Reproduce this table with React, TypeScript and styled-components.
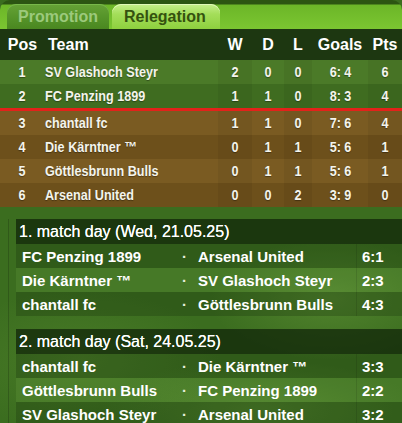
import React from "react";
import styled, { createGlobalStyle } from "styled-components";

const Global = createGlobalStyle`
  html, body { margin: 0; padding: 0; }
  body {
    width: 402px;
    height: 423px;
    overflow: hidden;
    font-family: "Liberation Sans", Arial, sans-serif;
    background:
      radial-gradient(ellipse 120px 60px at 330px 300px, rgba(120,170,70,0.35), transparent),
      radial-gradient(ellipse 140px 70px at 80px 360px, rgba(110,160,60,0.25), transparent),
      radial-gradient(ellipse 160px 50px at 260px 410px, rgba(120,170,70,0.3), transparent),
      #3b6d1f;
  }
`;

const Page = styled.div`
  display: flex;
  flex-direction: column;
`;

const TabBar = styled.div`
  display: flex;
  align-items: flex-end;
  gap: 3px;
  height: 29px;
  box-sizing: border-box;
  padding: 4px 0 0 7px;
  border-radius: 10px 10px 0 0;
  background: linear-gradient(#2c5512 0, #2c5512 4px, #6cb628 5px, #7bc631 100%);
`;

const Tab = styled.div<{ $active?: boolean }>`
  height: 25px;
  box-sizing: border-box;
  padding: 0 ${(p) => (p.$active ? "14px" : "11px")} 0 ${(p) => (p.$active ? "12px" : "11px")};
  display: flex;
  align-items: center;
  border-radius: 9px 9px 0 0;
  font-weight: bold;
  font-size: 16px;
  color: ${(p) => (p.$active ? "#35520f" : "#9cc97c")};
  background: ${(p) =>
    p.$active
      ? "linear-gradient(#c6ef8c 0, #a4de5a 40%, #8ed03e 100%)"
      : "linear-gradient(#66a236 0, #56952a 50%, #4a8720 100%)"};
  box-shadow: ${(p) => (p.$active ? "inset 0 1px 0 #e0f8b8" : "inset 0 1px 0 #78b84a")};
`;

const COLS = "45px 173px 34px 32px 28px 56px 34px";

const HeadRow = styled.div`
  display: grid;
  grid-template-columns: ${COLS};
  height: 31px;
  align-items: center;
  background: #1d3711;
  color: #ffffff;
  font-weight: bold;
  font-size: 16px;
`;

const HeadCell = styled.div<{ $left?: boolean }>`
  text-align: ${(p) => (p.$left ? "left" : "center")};
  padding-left: ${(p) => (p.$left ? "3px" : "0")};
`;

const Row = styled.div<{ $zone: "up" | "down"; $odd: boolean; $cut?: boolean }>`
  display: grid;
  grid-template-columns: ${COLS};
  height: 24px;
  align-items: center;
  color: #f4f4ec;
  font-weight: bold;
  font-size: 14.5px;
  text-shadow: 0 1px 1px rgba(0, 0, 0, 0.35);
  background: ${(p) =>
    p.$zone === "up"
      ? p.$odd
        ? "#4b7a28"
        : "#3f6c20"
      : p.$odd
      ? "#7a5b22"
      : "#6d501b"};
  border-bottom: ${(p) => (p.$cut ? "3px solid #e3221a" : "none")};
`;

const Cell = styled.div<{ $left?: boolean; $shade?: boolean }>`
  height: 100%;
  display: flex;
  align-items: center;
  justify-content: ${(p) => (p.$left ? "flex-start" : "center")};
  background: ${(p) => (p.$shade ? "rgba(0,0,0,0.05)" : "transparent")};
  white-space: pre;
`;

const Narrow = styled.span<{ $left?: boolean }>`
  display: inline-block;
  transform: scaleX(0.87);
  transform-origin: ${(p) => (p.$left ? "left center" : "center")};
`;

const Matches = styled.div`
  margin: 12px 0 0 8px;
  padding-left: 7px;
  border-left: 1px solid rgba(0, 0, 0, 0.18);
  display: flex;
  flex-direction: column;
  gap: 13px;
`;

const Section = styled.div`
  display: flex;
  flex-direction: column;
`;

const DayHead = styled.div`
  height: 25px;
  display: flex;
  align-items: center;
  padding-left: 3px;
  background: rgba(15, 35, 8, 0.72);
  color: #ffffff;
  font-size: 16px;
  text-shadow: 0 0 0.4px #ffffff;
`;

const MatchRow = styled.div<{ $odd: boolean }>`
  display: grid;
  grid-template-columns: 160px 16px 158px 1fr;
  height: 24px;
  align-items: center;
  padding-left: 6px;
  background: ${(p) => (p.$odd ? "rgba(20,45,10,0.28)" : "rgba(140,200,90,0.14)")};
  color: #ffffff;
  font-weight: bold;
  font-size: 15px;
  white-space: nowrap;
`;

const Dot = styled.div`
  text-align: left;
  color: #e6eedc;
`;

const Score = styled.div`
  height: 100%;
  display: flex;
  align-items: center;
  padding-left: 5px;
  border-left: 1px solid rgba(0, 0, 0, 0.1);
`;

const table = [
  { pos: 1, team: "SV Glashoch Steyr", w: 2, d: 0, l: 0, g: "6: 4", p: 6 },
  { pos: 2, team: "FC Penzing 1899", w: 1, d: 1, l: 0, g: "8: 3", p: 4 },
  { pos: 3, team: "chantall fc", w: 1, d: 1, l: 0, g: "7: 6", p: 4 },
  { pos: 4, team: "Die Kärntner ™", w: 0, d: 1, l: 1, g: "5: 6", p: 1 },
  { pos: 5, team: "Göttlesbrunn Bulls", w: 0, d: 1, l: 1, g: "5: 6", p: 1 },
  { pos: 6, team: "Arsenal United", w: 0, d: 0, l: 2, g: "3: 9", p: 0 },
];

const days = [
  {
    title: "1. match day (Wed, 21.05.25)",
    games: [
      ["FC Penzing 1899", "Arsenal United", "6:1"],
      ["Die Kärntner ™", "SV Glashoch Steyr", "2:3"],
      ["chantall fc", "Göttlesbrunn Bulls", "4:3"],
    ],
  },
  {
    title: "2. match day (Sat, 24.05.25)",
    games: [
      ["chantall fc", "Die Kärntner ™", "3:3"],
      ["Göttlesbrunn Bulls", "FC Penzing 1899", "2:2"],
      ["SV Glashoch Steyr", "Arsenal United", "3:2"],
    ],
  },
];

export default function App() {
  return (
    <Page>
      <Global />
      <TabBar>
        <Tab>Promotion</Tab>
        <Tab $active>Relegation</Tab>
      </TabBar>
      <HeadRow>
        <HeadCell>Pos</HeadCell>
        <HeadCell $left>Team</HeadCell>
        <HeadCell>W</HeadCell>
        <HeadCell>D</HeadCell>
        <HeadCell>L</HeadCell>
        <HeadCell>Goals</HeadCell>
        <HeadCell>Pts</HeadCell>
      </HeadRow>
      {table.map((r, i) => (
        <Row key={r.pos} $zone={i < 2 ? "up" : "down"} $odd={i % 2 === 0} $cut={i === 1}>
          <Cell><Narrow>{r.pos}</Narrow></Cell>
          <Cell $left><Narrow $left>{r.team}</Narrow></Cell>
          <Cell $shade><Narrow>{r.w}</Narrow></Cell>
          <Cell><Narrow>{r.d}</Narrow></Cell>
          <Cell $shade><Narrow>{r.l}</Narrow></Cell>
          <Cell><Narrow>{r.g}</Narrow></Cell>
          <Cell $shade><Narrow>{r.p}</Narrow></Cell>
        </Row>
      ))}
      <Matches>
        {days.map((d) => (
          <Section key={d.title}>
            <DayHead>{d.title}</DayHead>
            {d.games.map((g, i) => (
              <MatchRow key={i} $odd={i % 2 === 0}>
                <div>{g[0]}</div>
                <Dot>·</Dot>
                <div>{g[1]}</div>
                <Score>{g[2]}</Score>
              </MatchRow>
            ))}
          </Section>
        ))}
      </Matches>
    </Page>
  );
}
